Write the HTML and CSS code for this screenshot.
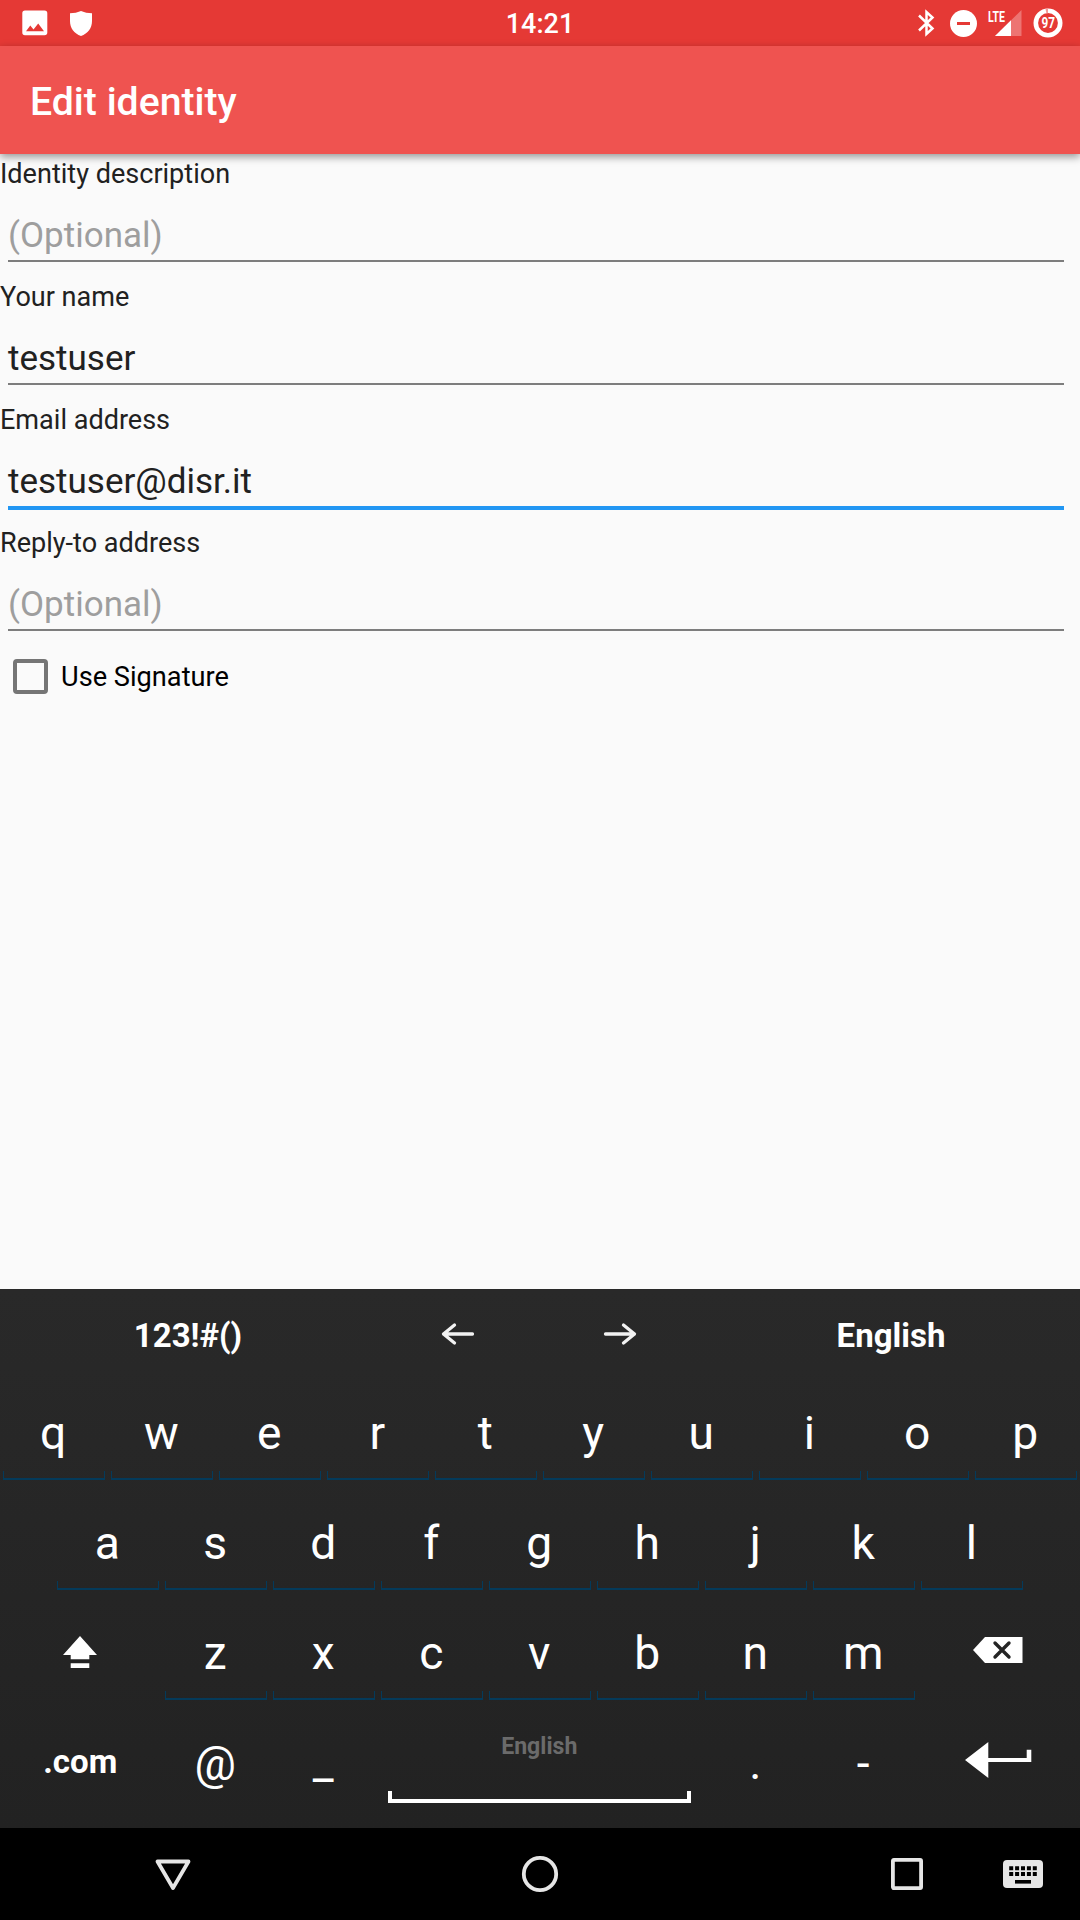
FILE: index.html
```html
<!DOCTYPE html>
<html lang="en">
<head>
<meta charset="utf-8">
<title>Edit identity</title>
<link rel="stylesheet" href="styles.css">
</head>
<body>
<div class="screen">
  <header class="status">
    <div class="status-side">
      <svg class="st-image" width="26" height="26" viewBox="0 0 26 26"><path fill="#fff" fill-rule="evenodd" d="M3 .5h19.500a2.800 2.800 0 0 1 2.800 2.800v19.200a2.800 2.800 0 0 1-2.800 2.800H3A2.800 2.800 0 0 1 .3 22.500V3.300A2.800 2.800 0 0 1 3 .5zM4 21.300h18L16.200 13.500l-4.700 6-3.200-4z"/></svg>
      <svg class="st-shield" width="22" height="25" viewBox="0 0 22 25"><path fill="#fff" d="M11 0Q16 2.300 22 2.300V10C22 17 18 22.500 11 25 4 22.500 0 17 0 10V2.300Q6 2.300 11 0z"/></svg>
    </div>
    <div class="clock">14:21</div>
    <div class="status-side status-right">
      <svg class="st-bt" width="17" height="28" viewBox="0 0 17 28"><path d="M1 6.500 14.500 19.500 8.500 25V3L14.500 8.500 1 21.500" fill="none" stroke="#fff" stroke-width="2.500"/></svg>
      <svg class="st-dnd" width="27" height="27" viewBox="0 0 27 27"><circle cx="13.500" cy="13.500" r="13.500" fill="#fff"/><path fill="#e53935" d="M7 12h13v3H7z"/></svg>
      <svg class="st-signal" width="34" height="28" viewBox="0 0 34 28"><path fill="#fff" fill-opacity=".3" d="M33.500 1v26H7z"/><path fill="#fff" d="M23 11.300V27H7z"/><text class="lte" x="0" y="13" textLength="17" lengthAdjust="spacingAndGlyphs">LTE</text></svg>
      <svg class="st-battery" width="30" height="30" viewBox="0 0 30 30"><circle cx="15" cy="15" r="12.200" fill="none" stroke="#fff" stroke-width="4.600"/><path fill="#f29c9a" d="M12.500 .4 15 .2V5.200L13.400 5.300z"/><text class="percent" x="8.500" y="20.200" textLength="13.500" lengthAdjust="spacingAndGlyphs">97</text></svg>
    </div>
  </header>
  <div class="appbar"><h1>Edit identity</h1></div>

  <main class="form">
    <div class="field"><label>Identity description</label><div class="input hint">(Optional)</div></div>
    <div class="field"><label>Your name</label><div class="input">testuser</div></div>
    <div class="field"><label>Email address</label><div class="input focused">testuser@disr.it</div></div>
    <div class="field"><label>Reply-to address</label><div class="input hint">(Optional)</div></div>
    <div class="check"><span class="box"></span><span class="check-label">Use Signature</span></div>
  </main>

  <section class="keyboard">
    <div class="tools">
      <div class="tool wide symbols">123!#()</div>
      <div class="tool"><svg width="34" height="22" viewBox="0 0 34 22"><path class="arrow" d="M31.500 11H2.500M13.500 2 2.500 11l11 9"/></svg></div>
      <div class="tool"><svg width="34" height="22" viewBox="0 0 34 22"><path class="arrow" d="M2.500 11h29M20.500 2l11 9-11 9"/></svg></div>
      <div class="tool wide">English</div>
    </div>
    <div class="row">
      <div class="key lined">q</div><div class="key lined">w</div><div class="key lined">e</div><div class="key lined">r</div><div class="key lined">t</div><div class="key lined">y</div><div class="key lined">u</div><div class="key lined">i</div><div class="key lined">o</div><div class="key lined">p</div>
    </div>
    <div class="row">
      <div class="key lined">a</div><div class="key lined">s</div><div class="key lined">d</div><div class="key lined">f</div><div class="key lined">g</div><div class="key lined">h</div><div class="key lined">j</div><div class="key lined">k</div><div class="key lined">l</div>
    </div>
    <div class="row">
      <div class="key side"><svg class="shift" width="34" height="32" viewBox="0 0 34 32"><path fill="#fff" d="M17 0 34 19H26.300v4.300H7.700V19H0zM7.700 27.300h18.600V32H7.700z"/></svg></div>
      <div class="key lined">z</div><div class="key lined">x</div><div class="key lined">c</div><div class="key lined">v</div><div class="key lined">b</div><div class="key lined">n</div><div class="key lined">m</div>
      <div class="key side"><svg class="erase" width="50" height="26" viewBox="0 0 50 26"><path fill="#fff" d="M0 13 12 0h37.500v26H12z"/><path d="m22 6 14 14M36 6 22 20" stroke="#242424" stroke-width="3.400" stroke-linecap="round"/></svg></div>
    </div>
    <div class="row">
      <div class="key side com">.com</div>
      <div class="key at">@</div><div class="key">_</div>
      <div class="key space">English</div>
      <div class="key">.</div><div class="key">-</div>
      <div class="key side"><svg class="enter" width="67" height="36" viewBox="0 0 67 36"><path fill="#fff" d="M0 18 23.300 0v16H61.700V7.700h4.600V20h-43v16z"/></svg></div>
    </div>
  </section>

  <nav class="navbar">
    <svg class="back" width="36" height="32" viewBox="0 0 36 32"><path d="M2.500 2.500h31L18 29z" class="outline"/></svg>
    <svg class="home" width="36" height="36" viewBox="0 0 36 36"><circle cx="18" cy="18" r="16.200" class="outline"/></svg>
    <svg class="recent" width="32" height="32" viewBox="0 0 32 32"><rect x="1.900" y="1.900" width="28.200" height="28.200" rx="1" class="outline"/></svg>
    <svg class="ime" width="40" height="28" viewBox="0 0 40 28"><rect width="40" height="28" rx="4" fill="#e6e6e6"/><path d="M6.200 8.200h28M6.200 14h28" stroke="#000" stroke-width="4" stroke-dasharray="4 1.900"/><path fill="#000" d="M12 20h16v3.600H12z"/></svg>
  </nav>
</div>
</body>
</html>
```
FILE: styles.css
```css
* { box-sizing: border-box; }
body { margin: 0; font-family: Roboto, sans-serif; }
svg { display: block; flex: none; overflow: visible; }

.screen {
  width: 1080px;
  height: 1920px;
  display: flex;
  flex-direction: column;
  background: #fafafa;
  overflow: hidden;
}

/* status bar */
.status {
  height: 46px;
  flex: none;
  display: grid;
  grid-template-columns: 1fr auto 1fr;
  background: #e53935;
  color: #fff;
}
.status-side { display: flex; align-items: flex-start; padding: 10px 0 0 22px; }
.status-right { justify-content: flex-end; padding: 8px 17.500px 0 0; }
.st-shield { margin: 1px 0 0 22px; }
.st-bt { margin-top: 1px; }
.st-dnd { margin: 1.5px 0 0 15px; }
.st-signal { margin: 1px 0 0 11px; }
.st-battery { margin-left: 11px; }
.lte { font: 700 15.500px "Roboto", sans-serif; fill: #fff; }
.percent { font: 700 14px "Roboto", sans-serif; fill: #fff; }
.clock { font-size: 27px; font-weight: 500; line-height: 49px; }

/* app bar */
.appbar {
  height: 108px;
  flex: none;
  padding-left: 30px;
  background: #ef5350;
  color: #fff;
  box-shadow: 0 3px 8px rgba(0, 0, 0, .4);
  z-index: 1;
}
.appbar h1 { margin: 0; font-size: 39.200px; font-weight: 500; line-height: 112px; }

/* form */
.form { flex: 1; color: #212121; }
.field { height: 123px; padding-top: 4px; font-size: 27.050px; }
.field label { display: block; line-height: 32px; }
.input {
  height: 72px;
  margin: 0 16px 0 8px;
  padding-top: 26px;
  border-bottom: 2px solid #7d7d7d;
  font-size: 35px;
  line-height: 40px;
}
.hint { color: #9e9e9e; }
.focused { height: 74px; border-bottom: 4px solid #2196f3; }
.check {
  display: flex;
  align-items: center;
  gap: 13px;
  padding: 13px 0 0 13px;
  color: #000;
  font-size: 27.200px;
  line-height: 33px;
}
.check-label { padding-top: 2px; }
.box { width: 35px; height: 35px; border: 4px solid #757575; border-radius: 4px; }

/* keyboard */
.keyboard {
  height: 539px;
  flex: none;
  background: linear-gradient(#292929, #222);
  color: #fff;
}
.tools { display: flex; height: 81px; font-size: 33px; font-weight: 700; line-height: 93px; }
.tool { width: 162px; padding-right: 2px; display: flex; justify-content: center; }
.tool svg { margin-top: 34px; }
.wide { width: 378px; padding-right: 0; }
.symbols { padding-right: 2px; }
.arrow { fill: none; stroke: #f2f2f2; stroke-width: 3.300px; stroke-linecap: round; stroke-linejoin: round; }
.row { display: flex; justify-content: center; height: 110px; }
.key {
  position: relative;
  width: 108px;
  height: 110px;
  padding: 18px 1.500px 0 0;
  display: flex;
  justify-content: center;
  font-size: 46.200px;
  line-height: 90px;
}
.lined::after {
  content: "";
  position: absolute;
  left: 3px;
  right: 3.500px;
  bottom: 0;
  height: 7px;
  border: 1px solid #043a5a;
  border-top: 0;
  border-bottom-width: 2px;
}
.side { width: 162px; }
.at { padding-top: 19px; }
.com { font-size: 33px; font-weight: 700; padding-top: 17px; }
.space {
  width: 324px;
  padding-top: 32px;
  color: #6b6b6b;
  font-size: 23.100px;
  font-weight: 700;
  line-height: 30px;
}
.space::after {
  content: "";
  position: absolute;
  left: 10px;
  right: 11px;
  bottom: 7px;
  height: 8px;
  border: 4px solid #fff;
  border-top: 0;
}
.shift { margin-top: 28px; }
.erase { margin-top: 29px; }
.enter { margin-top: 24px; }

/* navigation bar */
.navbar {
  height: 92px;
  flex: none;
  display: flex;
  align-items: center;
  padding-left: 155px;
  background: #000;
}
.outline { fill: none; stroke: #e6e6e6; stroke-width: 3.800px; stroke-linejoin: round; }
.back { margin-top: 2px; }
.home { margin-left: 331px; }
.recent { margin-left: 333px; }
.ime { margin-left: 80px; }
```
